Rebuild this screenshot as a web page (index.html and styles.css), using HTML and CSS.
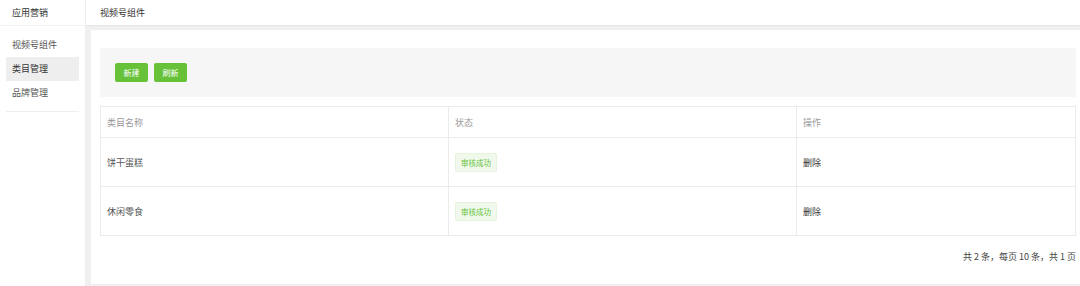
FILE: index.html
```html
<!DOCTYPE html>
<html>
  <head>
    <title>应用营销</title>
    <meta name="viewport" content="width=device-width, initial-scale=1">
    <link rel="stylesheet" href="styles.css">
  </head>
  <body>
    <div class="app">
      <!-- Sidebar -->
      <div class="sidebar">
        <div class="sidebar-head">应用营销</div>
        <ul class="menu">
          <li class="menu-item">视频号组件</li>
          <li class="menu-item active">类目管理</li>
          <li class="menu-item">品牌管理</li>
        </ul>
      </div>
      <div class="main">
        <div class="topbar">视频号组件</div>
        <div class="card">
          <div class="toolbar">
            <button class="btn">新建</button>
            <button class="btn">刷新</button>
          </div>
          <table class="table">
            <thead>
              <tr>
                <th class="col-name">类目名称</th>
                <th class="col-status">状态</th>
                <th>操作</th>
              </tr>
            </thead>
            <tbody>
              <tr>
                <td>饼干蛋糕</td>
                <td><span class="tag">审核成功</span></td>
                <td class="op">删除</td>
              </tr>
              <tr>
                <td>休闲零食</td>
                <td><span class="tag">审核成功</span></td>
                <td class="op">删除</td>
              </tr>
            </tbody>
          </table>
          <div class="pager">共 2 条，每页 10 条，共 1 页</div>
        </div>
      </div>
    </div>
  </body>
</html>
```

FILE: styles.css
```css
body {
  margin: 0;
  padding: 0;
  font-family: "Noto Sans CJK SC", "Noto Sans", sans-serif;
  font-size: 9px;
  color: #606266;
  background: #fff;
}
.app {
  display: flex;
  height: 286px;
}
.sidebar {
  width: 85px;
  flex-shrink: 0;
  background: #fff;
  border-right: 1px solid #eee;
}
.sidebar-head {
  height: 26px;
  line-height: 25px;
  padding-left: 12px;
  color: #333;
  border-bottom: 1px solid #f2f2f2;
  box-sizing: border-box;
}
.menu {
  list-style: none;
  margin: 7px 6px 0;
  padding: 0 0 6px;
  border-bottom: 1px solid #eee;
}
.menu-item {
  height: 24px;
  line-height: 24px;
  padding-left: 6px;
  color: #555;
}
.menu-item.active {
  background: #eee;
  color: #333;
}
.main {
  flex: 1;
  display: flex;
  flex-direction: column;
  background: #f0f0f0;
}
.topbar {
  height: 26px;
  line-height: 25px;
  padding-left: 14px;
  background: #fff;
  color: #333;
  border-bottom: 1px solid #e6e6e6;
  box-sizing: border-box;
}
.card {
  margin: 4px 0 2px 5px;
  flex: 1;
  background: #fff;
  padding: 18px 4px 0 9px;
}
.toolbar {
  height: 49px;
  background: #f6f6f6;
  display: flex;
  align-items: center;
  padding-left: 15px;
  gap: 6px;
}
.btn {
  height: 19px;
  width: 33px;
  padding: 0;
  border: none;
  border-radius: 2px;
  background: #67c23a;
  color: #fff;
  font-family: inherit;
  font-size: 8px;
}
.table {
  margin-top: 9px;
  width: 100%;
  border-collapse: collapse;
  table-layout: fixed;
  font-size: 9px;
}
.table th,
.table td {
  border: 1px solid #ebebeb;
  text-align: left;
  padding: 0 6px;
  font-weight: normal;
}
.table th {
  height: 30px;
  color: #999;
}
.table td {
  height: 48px;
  color: #555;
}
.col-name,
.col-status {
  width: 335px;
}
.tag {
  display: inline-block;
  height: 19px;
  line-height: 18px;
  padding: 0 5px;
  box-sizing: border-box;
  border: 1px solid #e6f4dd;
  border-radius: 2px;
  background: #f0f9eb;
  color: #67c23a;
  font-size: 7.5px;
}
.table td.op {
  color: #333;
}
.pager {
  text-align: right;
  padding-top: 14px;
  color: #444;
}
```
